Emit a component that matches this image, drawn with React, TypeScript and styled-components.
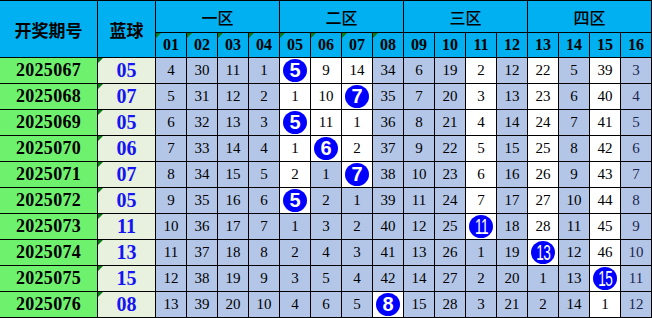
import React from 'react';
import styled, { createGlobalStyle, css } from 'styled-components';

const GlobalStyle = createGlobalStyle`
    html, body {
        margin: 0;
        padding: 0;
        background: #ffffff;
    }
    body {
        font-family: "Liberation Serif", "Noto Sans CJK SC", serif;
    }
`;

const Table = styled.table`
    border-collapse: collapse;
    table-layout: fixed;
    width: 651px;
    margin-left: -1px;
`;

const HeadRow = styled.tr<{ $h: number }>`
    height: ${({ $h }) => $h}px;
`;

const DataRow = styled.tr`
    height: 26px;
`;

const cellBase = css`
    border: 1px solid #000;
    padding: 0;
    text-align: center;
    vertical-align: middle;
    position: relative;
`;

const mark = css`
    &::before {
        content: '';
        position: absolute;
        top: 0;
        left: 0;
        width: 0;
        height: 0;
        border-top: 5px solid #0b7d16;
        border-right: 5px solid transparent;
    }
`;

const TitleCell = styled.th`
    ${cellBase};
    background: #00b0f0;
    color: #000;
    font-family: "Noto Sans CJK SC", sans-serif;
    font-size: 17px;
    font-weight: 700;
`;

const ZoneCell = styled.th`
    ${cellBase};
    background: #00b0f0;
    color: #000;
    font-family: "Noto Sans CJK SC", sans-serif;
    font-size: 16px;
    font-weight: 500;
`;

const NumHead = styled.th<{ $mark?: boolean }>`
    ${cellBase};
    background: #00b0f0;
    color: #000;
    font-family: "Liberation Serif", serif;
    font-size: 16px;
    font-weight: 700;
    ${({ $mark }) => $mark && mark};
`;

const PeriodCell = styled.td`
    ${cellBase};
    background: #6ef26e;
    color: #000;
    font-size: 18px;
    font-weight: 700;
    letter-spacing: 0.3px;
`;

const BlueCell = styled.td`
    ${cellBase};
    background: #e8f1de;
    color: #1414f5;
    font-size: 20px;
    font-weight: 700;
    ${mark};
`;

const NumCell = styled.td<{ $white: boolean; $last?: boolean }>`
    ${cellBase};
    background: ${({ $white }) => ($white ? '#ffffff' : '#b4c6e7')};
    color: ${({ $last }) => ($last ? '#1c2650' : '#000')};
    font-size: 15px;
`;

const Ball = styled.span<{ $wide: boolean }>`
    display: inline-flex;
    align-items: center;
    justify-content: center;
    width: 24px;
    height: 23px;
    border-radius: 50%;
    background: #0000ff;
    color: #fff;
    font-family: "Liberation Sans", "DejaVu Sans", sans-serif;
    vertical-align: middle;
    ${({ $wide }) =>
        $wide
            ? css`
                  font-size: 22px;
                  font-weight: 400;
                  letter-spacing: -1px;
                  span {
                      display: inline-block;
                      transform: scaleX(0.62);
                  }
              `
            : css`
                  font-size: 20px;
                  font-weight: 700;
              `};
`;

type Row = { period: string; blue: string; values: number[]; white: number[] };

const rows: Row[] = [
    { period: '2025067', blue: '05', values: [4, 30, 11, 1, 5, 9, 14, 34, 6, 19, 2, 12, 22, 5, 39, 3], white: [5, 6, 7, 11, 13, 15] },
    { period: '2025068', blue: '07', values: [5, 31, 12, 2, 1, 10, 7, 35, 7, 20, 3, 13, 23, 6, 40, 4], white: [5, 6, 7, 11, 13, 15] },
    { period: '2025069', blue: '05', values: [6, 32, 13, 3, 5, 11, 1, 36, 8, 21, 4, 14, 24, 7, 41, 5], white: [5, 6, 7, 11, 13, 15] },
    { period: '2025070', blue: '06', values: [7, 33, 14, 4, 1, 6, 2, 37, 9, 22, 5, 15, 25, 8, 42, 6], white: [5, 6, 7, 11, 13, 15] },
    { period: '2025071', blue: '07', values: [8, 34, 15, 5, 2, 1, 7, 38, 10, 23, 6, 16, 26, 9, 43, 7], white: [5, 7, 11, 13, 15] },
    { period: '2025072', blue: '05', values: [9, 35, 16, 6, 5, 2, 1, 39, 11, 24, 7, 17, 27, 10, 44, 8], white: [5, 11, 13, 15] },
    { period: '2025073', blue: '11', values: [10, 36, 17, 7, 1, 3, 2, 40, 12, 25, 11, 18, 28, 11, 45, 9], white: [11, 13, 15] },
    { period: '2025074', blue: '13', values: [11, 37, 18, 8, 2, 4, 3, 41, 13, 26, 1, 19, 13, 12, 46, 10], white: [13, 15] },
    { period: '2025075', blue: '15', values: [12, 38, 19, 9, 3, 5, 4, 42, 14, 27, 2, 20, 1, 13, 15, 11], white: [15] },
    { period: '2025076', blue: '08', values: [13, 39, 20, 10, 4, 6, 5, 8, 15, 28, 3, 21, 2, 14, 1, 12], white: [8, 15] },
];

const zones = ['一区', '二区', '三区', '四区'];
const cols = Array.from({ length: 16 }, (_, i) => i + 1);

const App: React.FC = () => {
    return (
        <>
            <GlobalStyle />
            <Table>
                <colgroup>
                    <col style={{ width: 98 }} />
                    <col style={{ width: 58 }} />
                    {cols.map((c) => (
                        <col key={c} style={{ width: 31 }} />
                    ))}
                </colgroup>
                <thead>
                    <HeadRow $h={32}>
                        <TitleCell rowSpan={2}>开奖期号</TitleCell>
                        <TitleCell rowSpan={2}>蓝球</TitleCell>
                        {zones.map((z) => (
                            <ZoneCell key={z} colSpan={4}>
                                {z}
                            </ZoneCell>
                        ))}
                    </HeadRow>
                    <HeadRow $h={25}>
                        {cols.map((c) => (
                            <NumHead key={c} $mark={c <= 8}>
                                {String(c).padStart(2, '0')}
                            </NumHead>
                        ))}
                    </HeadRow>
                </thead>
                <tbody>
                    {rows.map((row) => {
                        const hit = parseInt(row.blue, 10);
                        return (
                            <DataRow key={row.period}>
                                <PeriodCell>{row.period}</PeriodCell>
                                <BlueCell>{row.blue}</BlueCell>
                                {row.values.map((v, i) => {
                                    const col = i + 1;
                                    return (
                                        <NumCell key={col} $white={row.white.includes(col)} $last={col === 16}>
                                            {col === hit ? (
                                                <Ball $wide={v > 9}>
                                                    <span>{v}</span>
                                                </Ball>
                                            ) : (
                                                v
                                            )}
                                        </NumCell>
                                    );
                                })}
                            </DataRow>
                        );
                    })}
                </tbody>
            </Table>
        </>
    );
};

export default App;
